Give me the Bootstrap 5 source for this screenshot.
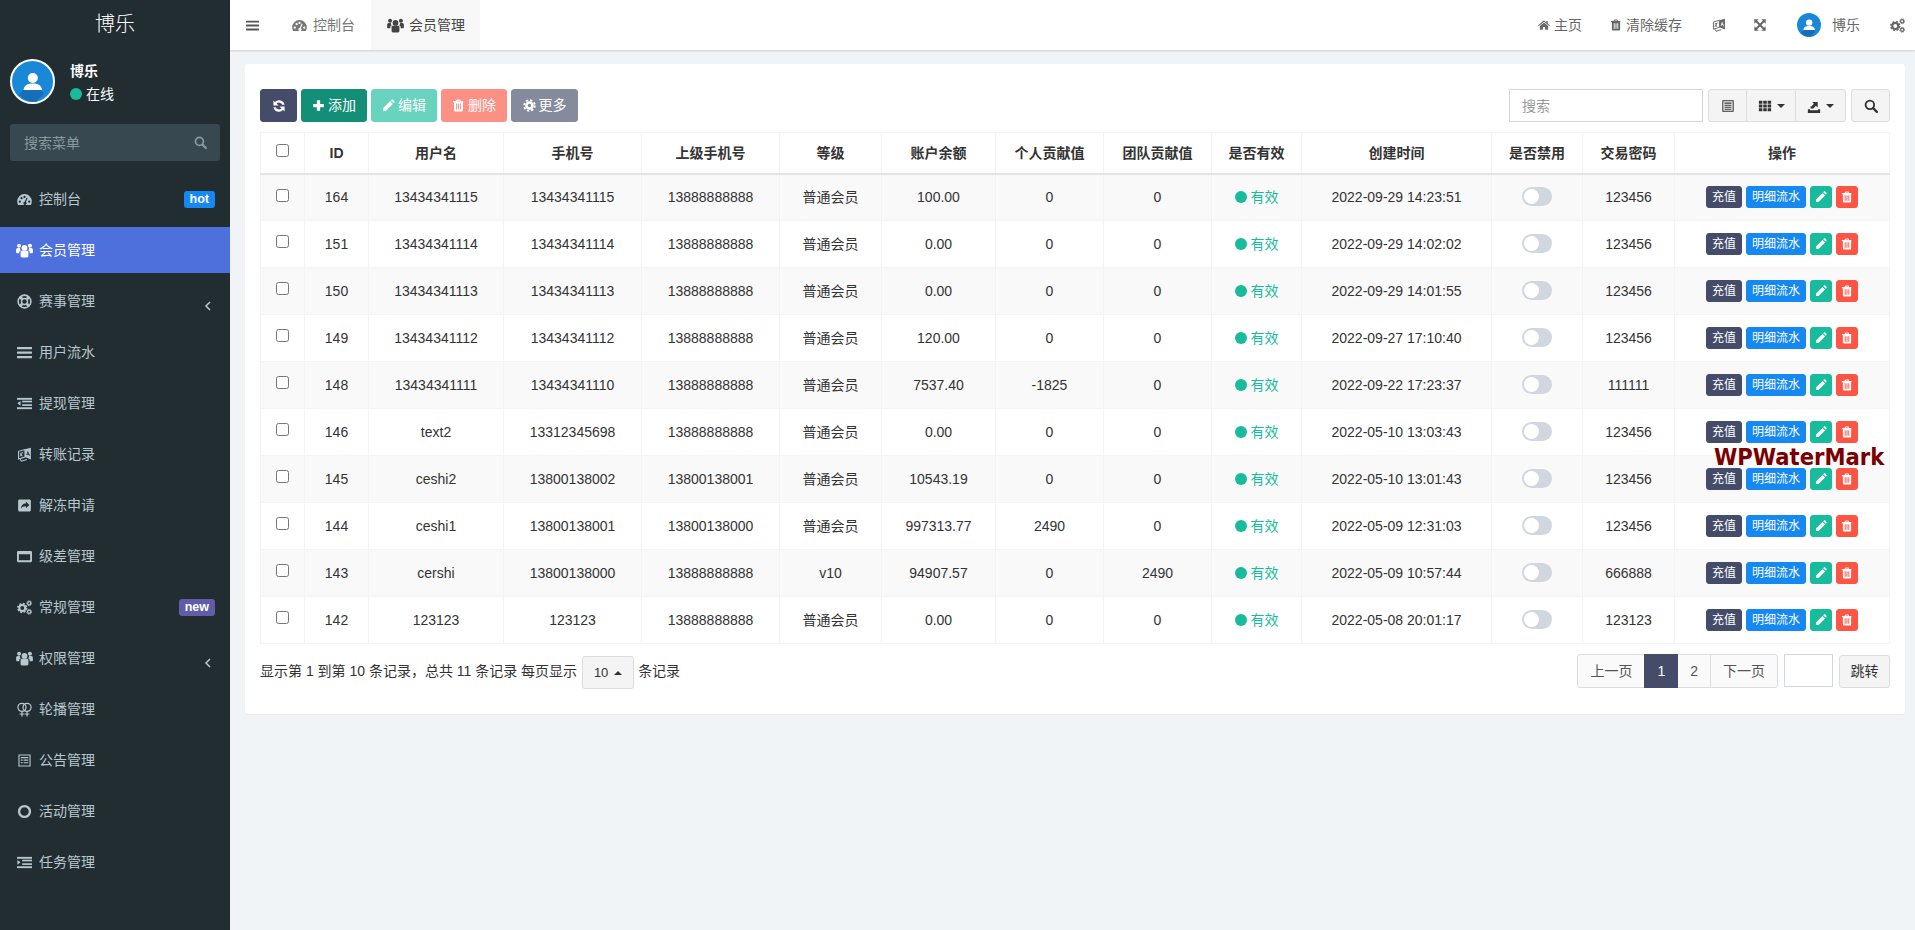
<!DOCTYPE html>
<html lang="zh-CN">
<head>
    <meta charset="UTF-8">
    <title>会员管理</title>
    <meta name="viewport" content="width=device-width, initial-scale=1">
    <link href="https://cdn.jsdelivr.net/npm/bootstrap@5.3.2/dist/css/bootstrap.min.css" rel="stylesheet">
    <script src="https://cdn.jsdelivr.net/npm/bootstrap@5.3.2/dist/js/bootstrap.bundle.min.js"></script>
    <style>
        body {
            font-family: "Liberation Sans", "Noto Sans CJK SC", sans-serif;
            font-size: 14px;
            line-height: 20px;
            color: #333;
            background-color: #f1f4f6;
            min-height: 930px;
        }
        .ico { width: 1em; height: 1em; fill: currentColor; flex: none; }
        .caret-down, .caret-up { display: inline-block; width: 0; height: 0; border-left: 4px solid transparent; border-right: 4px solid transparent; }
        .caret-down { border-top: 4px solid currentColor; }
        .caret-up { border-bottom: 4px solid currentColor; }

        /* sidebar */
        .side-bar { width: 230px; background-color: #222d32; flex: none; min-height: 930px; }
        .side-logo { height: 50px; font-size: 20px; color: #fff; line-height: 48px; text-align: center; font-weight: 300; }
        .side-user { margin: 9px 0 0 10px; height: 45px; gap: 15px; color: #fff; }
        .side-avatar { width: 45px; height: 45px; }
        .side-name { font-weight: 700; margin-top: 2px; }
        .side-status { margin-top: 3px; font-size: 14px; gap: 4px; }
        .dot-on { width: 12px; height: 12px; border-radius: 50%; background-color: #18bc9c; flex: none; }
        .side-search { margin: 20px 10px 15px; height: 37px; background-color: #374850; border-radius: 3px; padding: 0 13px 0 14px; color: #8a989f; }
        .side-search .ico { font-size: 13px; }
        .side-menu .nav-link { height: 46px; margin-bottom: 5px; padding: 0 15px 0 17px; color: #b8c7ce; gap: 7px; }
        .side-menu .nav-link .ico { font-size: 15px; width: 15px; }
        .side-menu .nav-link .ico-u { font-size: 17px; width: 17px; margin: 0 -1px; }
        .side-menu .nav-link.active { background-color: #4e70dc; color: #fff; }
        .side-tag { font-size: 12.5px; font-weight: 700; line-height: 17px; height: 17px; padding: 0 6px; border-radius: 3px; color: #fff; }
        .tag-hot { background-color: #1688f1; }
        .tag-new { background-color: #605ca8; }
        .side-menu .nav-link .side-chevron { font-size: 10px; width: 10px; margin: 9px 2px 0 0; }

        /* top bar */
        .top-bar { height: 50px; background-color: #fff; box-shadow: 0 1px 2px rgba(0, 0, 0, .15); color: #666; }
        .top-toggle { width: 46px; padding-left: 16px; color: #555; }
        .top-toggle .ico { font-size: 13px; }
        .top-tab { height: 50px; padding: 0 16px; gap: 6px; color: #777; }
        .top-tab.on { background-color: #f8f8f8; color: #444; padding: 0 15px 0 16px; }
        .top-tab .ico { font-size: 15px; }
        .top-tab.on .ico { font-size: 17px; margin-right: -1px; }
        .top-right { gap: 30px; padding-right: 10px; }
        .top-right .d-flex { gap: 4px; }
        .top-right .ico-sm { font-size: 12px; }
        .top-right .ico-md { font-size: 15px; }
        .top-right .ico-lang { margin-right: -3px; }
        .top-right .shift-left { margin-left: -2px; }
        .top-avatar { width: 24px; height: 24px; margin-right: 7px; }

        /* panel */
        .page-body { padding: 14px 10px 0 15px; }
        .panel-box { background-color: #fff; border-radius: 3px; padding: 25px 15px 26px; box-shadow: 0 1px 1px rgba(0, 0, 0, .04); height: 650px; position: relative; }
        .tool-row { margin-bottom: 10px; }
        .btn-tool { --bs-btn-padding-x: 0; --bs-btn-padding-y: 0; --bs-btn-font-size: 14px; --bs-btn-line-height: 31px; --bs-btn-border-radius: 3px; --bs-btn-color: #fff; --bs-btn-disabled-color: #fff; --bs-btn-disabled-opacity: .65; height: 33px; gap: 3px; }
        .btn-tool .ico { font-size: 13px; }
        .tool-navy { --bs-btn-bg: #444c69; --bs-btn-border-color: #444c69; --bs-btn-disabled-bg: #444c69; --bs-btn-disabled-border-color: #444c69; width: 37px; }
        .tool-navy .ico { font-size: 12px; }
        .tool-add { --bs-btn-bg: #128f76; --bs-btn-border-color: #128f76; width: 66px; }
        .tool-edit { --bs-btn-disabled-bg: #18bc9c; --bs-btn-disabled-border-color: #18bc9c; width: 66px; }
        .tool-del { --bs-btn-disabled-bg: #fc5545; --bs-btn-disabled-border-color: #fc5545; width: 66px; }
        .tool-more { --bs-btn-disabled-bg: #444c69; --bs-btn-disabled-border-color: #444c69; width: 67px; }
        .tool-search { width: 194px; height: 33px; margin-right: 5px; border-radius: 0; border: 1px solid #d2d6de; font-size: 14px; padding: 0 12px; }
        .tool-search::placeholder, .jump-input::placeholder { color: #999; }
        .btn-soft { --bs-btn-bg: #f4f4f4; --bs-btn-border-color: #ddd; --bs-btn-color: #333; --bs-btn-padding-x: 0; --bs-btn-padding-y: 0; --bs-btn-font-size: 14px; --bs-btn-line-height: 31px; --bs-btn-border-radius: 3px; height: 33px; gap: 5px; }
        .soft-a { width: 39px; }
        .soft-b { width: 50px; }
        .soft-c { width: 51px; }
        .soft-d { width: 39px; margin-left: 5px; }

        .data-table { --bs-table-border-color: #f4f4f4; --bs-table-striped-bg: #f9f9f9; --bs-table-color: #333; --bs-table-striped-color: #333; table-layout: fixed; width: 1629px; margin: 0; font-size: 14px; }
        .data-table th, .data-table td { padding: 0 4px; text-align: center; vertical-align: middle; height: 47px; white-space: nowrap; }
        .data-table thead th { height: 41px; font-weight: 700; border-bottom: 2px solid #e4e4e4; }
        .data-table > :not(caption) > * > * { border-color: #f4f4f4; }
        .data-table > thead > tr > th { border-bottom-color: #e4e4e4; }
        .data-table .form-check-input { width: 13px; height: 13px; margin: 0 0 6px; border: 1px solid #767676; border-radius: 2.5px; display: inline-block; vertical-align: middle; }
        .st-ok { color: #18bc9c; gap: 4px; }
        .switch-off { display: block; width: 30px; height: 19px; margin: 0 auto 2px; border-radius: 10px; background-color: #d2d6de; padding: 2px; }
        .switch-off i { display: block; width: 15px; height: 15px; border-radius: 50%; background-color: #fff; }
        .act-row { gap: 4px; }
        .btn-act { --bs-btn-padding-x: 0; --bs-btn-padding-y: 0; --bs-btn-font-size: 12px; --bs-btn-line-height: 20px; --bs-btn-border-radius: 3px; --bs-btn-color: #fff; height: 22px; }
        .act-navy { --bs-btn-bg: #444c69; --bs-btn-border-color: #444c69; width: 36px; }
        .act-blue { --bs-btn-bg: #1688f1; --bs-btn-border-color: #1688f1; width: 60px; }
        .act-green { --bs-btn-bg: #18bc9c; --bs-btn-border-color: #18bc9c; width: 22px; }
        .act-red { --bs-btn-bg: #fc5545; --bs-btn-border-color: #fc5545; width: 22px; }

        .foot-row { padding-top: 10px; }
        .btn-size { width: 52px; margin: 2px 4px 0 5px; gap: 6px; --bs-btn-font-size: 13px; }
        .foot-text { margin-top: 7px; }
        .foot-row .pagination { --bs-pagination-padding-x: 12px; --bs-pagination-padding-y: 6px; --bs-pagination-font-size: 14px; --bs-pagination-color: #555; --bs-pagination-bg: #fafafa; --bs-pagination-border-color: #ddd; --bs-pagination-border-radius: 3px; --bs-pagination-active-bg: #444c69; --bs-pagination-active-border-color: #444c69; margin: 0; }
        .jump-input { width: 49px; height: 33px; margin-left: 6px; border-radius: 0; border: 1px solid #d2d6de; }
        .btn-jump { width: 51px; margin: 1px 0 0 6px; }
        .mark-text { position: absolute; left: 1469px; top: 381px; font-family: "DejaVu Sans", sans-serif; font-stretch: condensed; font-weight: 700; font-size: 23.5px; line-height: 24px; color: #7a0000; white-space: nowrap; }
    </style>
</head>
<body>
    <svg width="0" height="0" class="position-absolute">
        <symbol id="i-dash" viewBox="0 0 16 16"><path fill-rule="evenodd" d="M8 2.2A7.8 7.8 0 0 0 .2 10c0 1.5.4 2.8 1.1 3.8h13.4c.7-1 1.100-2.300 1.100-3.800A7.800 7.800 0 0 0 8 2.200zM3 9.100a1.200 1.200 0 1 1 0 2.400 1.200 1.200 0 0 1 0-2.400zm1.900-3.700a1.200 1.200 0 1 1 0 2.400 1.200 1.200 0 0 1 0-2.400zM8 4a1.200 1.200 0 1 1 0 2.400A1.200 1.200 0 0 1 8 4zm3.400 2.300-1.900 4.400a1.700 1.700 0 1 1-1.300-.3L10.200 6zM13 9.100a1.200 1.200 0 1 1 0 2.400 1.200 1.200 0 0 1 0-2.400z"/></symbol>
        <symbol id="i-users" viewBox="0 0 16 16"><circle cx="8" cy="5.600" r="2.700"/><circle cx="2.900" cy="3.600" r="1.900"/><circle cx="13.100" cy="3.600" r="1.900"/><path d="M4.300 9.500c0-.8.600-1.300 1.300-1.300h4.800c.7 0 1.300.5 1.300 1.300v3.600c0 .8-.6 1.400-1.400 1.400H5.700c-.8 0-1.400-.6-1.400-1.400z"/><path d="M.1 7.500c0-1 .6-1.800 1.500-1.800h2.100c-.1 1.100.5 1.800 1 2.100-1 .3-1.600 1-1.600 1.800v1H1c-.5 0-.9-.4-.9-.9zM15.900 7.500c0-1-.6-1.800-1.500-1.800h-2.100c.1 1.100-.5 1.800-1 2.100 1 .3 1.600 1 1.600 1.800v1H15c.5 0 .9-.4.9-.9z"/></symbol>
        <symbol id="i-ring" viewBox="0 0 16 16"><circle cx="8" cy="8" r="6.800" fill="none" stroke="currentColor" stroke-width="1.700"/><circle cx="8" cy="8" r="3.200" fill="none" stroke="currentColor" stroke-width="1.500"/><path d="M3 3 5.600 5.600M13 3l-2.600 2.600M3 13l2.600-2.600M13 13l-2.600-2.600" stroke="currentColor" stroke-width="3"/></symbol>
        <symbol id="i-bars" viewBox="0 0 16 16"><rect y="2" width="16" height="2.400" rx=".5"/><rect y="6.800" width="16" height="2.400" rx=".5"/><rect y="11.600" width="16" height="2.400" rx=".5"/></symbol>
        <symbol id="i-outdent" viewBox="0 0 16 16"><rect y="2" width="16" height="2"/><rect x="5.500" y="5" width="10.500" height="1.800"/><rect x="5.500" y="8.800" width="10.500" height="1.800"/><rect y="12" width="16" height="2"/><path d="M3.800 5.300v5L.4 7.800z"/></symbol>
        <symbol id="i-indent" viewBox="0 0 16 16"><rect y="2" width="16" height="2"/><rect x="5.500" y="5" width="10.500" height="1.800"/><rect x="5.500" y="8.800" width="10.500" height="1.800"/><rect y="12" width="16" height="2"/><path d="M.4 5.300v5l3.400-2.500z"/></symbol>
        <symbol id="i-lang" viewBox="0 0 16 16"><path fill="none" stroke="currentColor" stroke-width="1.100" d="M8.500 2.600 1.600 4.600v8.200l6.900-2.100zM3.500 13l1.200 2.200 5.800-1.900"/><path fill-rule="evenodd" d="M8.500 2.500 14.800.8v12.400L8.500 10.700zM11.500 3.900l-1.600 4.700 1.100.3.300-.9 1.500.4.300 1 1 .3zm.1 2.100.5 1.500-.9-.2z"/><path d="M3 6.300l3.800-1.100v.9l-1 .3c-.1 1-.4 1.700-.9 2.300l1.300.7-.4.800-1.600-.9-1.300 1-.4-.7 1.200-.9c-.3-.4-.5-.8-.6-1.300l.8-.2c.1.300.2.600.4.800.3-.4.500-.9.600-1.400L3 7.100z"/></symbol>
        <symbol id="i-share" viewBox="0 0 16 16"><path fill-rule="evenodd" d="M2.800 1.500h10.400c.9 0 1.600.7 1.600 1.600v9.800c0 .9-.7 1.600-1.600 1.600H2.800c-.9 0-1.600-.7-1.600-1.600V3.100c0-.9.700-1.600 1.600-1.600zm6.700 2.300v2.100c-3.100 0-5 1.600-5.200 5.500 1-1.900 2.800-2.700 5.200-2.600v2.200l3.700-3.600z"/></symbol>
        <symbol id="i-window" viewBox="0 0 16 16"><path fill-rule="evenodd" d="M1.300 2h13.400c.7 0 1.300.6 1.300 1.300v9.400c0 .7-.6 1.300-1.300 1.300H1.300C.6 14 0 13.400 0 12.700V3.300C0 2.600.6 2 1.300 2zm.7 3.500V12h12V5.500z"/></symbol>
        <symbol id="i-cogs" viewBox="0 0 16 16"><circle cx="5.600" cy="8.500" r="3.200" fill="none" stroke="currentColor" stroke-width="2.200"/><circle cx="5.600" cy="8.500" r="4.700" fill="none" stroke="currentColor" stroke-width="1.700" stroke-dasharray="2 1.700"/><circle cx="13" cy="3.400" r="1.700" fill="none" stroke="currentColor" stroke-width="1.300"/><circle cx="13" cy="3.400" r="2.600" fill="none" stroke="currentColor" stroke-width="1" stroke-dasharray="1.200 1"/><circle cx="13" cy="12.600" r="1.700" fill="none" stroke="currentColor" stroke-width="1.300"/><circle cx="13" cy="12.600" r="2.600" fill="none" stroke="currentColor" stroke-width="1" stroke-dasharray="1.200 1"/></symbol>
        <symbol id="i-venus" viewBox="0 0 16 16"><g fill="none" stroke="currentColor" stroke-width="1.300"><circle cx="5.300" cy="5.700" r="4.300"/><circle cx="10.700" cy="5.700" r="4.300"/><path d="M5.300 10v5.500M10.700 10v5.500M2.800 12.800h5M8.200 12.800h5"/></g></symbol>
        <symbol id="i-list" viewBox="0 0 16 16"><path fill-rule="evenodd" d="M1.500 1.500h13v13h-13zM2.700 2.700v10.600h10.600V2.700z"/><path d="M4 4.300h8v1.200H4zM4 7h2v1.200H4zM7 7h5v1.200H7zM4 9.800h2V11H4zM7 9.800h5V11H7z"/></symbol>
        <symbol id="i-circle" viewBox="0 0 16 16"><circle cx="8" cy="8" r="5.800" fill="none" stroke="currentColor" stroke-width="2.500"/></symbol>
        <symbol id="i-chev" viewBox="0 0 10 10"><path fill="none" stroke="currentColor" stroke-width="1.500" d="M7 1 3 5l4 4"/></symbol>
        <symbol id="i-search" viewBox="0 0 16 16"><circle cx="6.700" cy="6.700" r="4.900" fill="none" stroke="currentColor" stroke-width="2.100"/><path d="m10.400 10.400 4.300 4.300" stroke="currentColor" stroke-width="2.600" stroke-linecap="round"/></symbol>
        <symbol id="i-refresh" viewBox="1.800 1.800 12.400 12.400"><path d="M13.800 6.800A5.900 5.900 0 0 0 3.800 3.800L2.200 2.200v5.300h5.300L5.500 5.500a3.600 3.600 0 0 1 5.900 1.300zM2.200 9.200a5.900 5.900 0 0 0 10 3l1.600 1.600V8.500H8.500l2 2a3.600 3.600 0 0 1-5.900-1.300z"/></symbol>
        <symbol id="i-plus" viewBox="0 0 16 16"><path d="M6 1.500h4v4.500h4.500v4H10v4.500H6V10H1.500V6H6z"/></symbol>
        <symbol id="i-pencil" viewBox="0 0 16 16"><path d="M1.300 11.300 10 2.600l3.400 3.400-8.700 8.700H1.300zM11 1.700l.9-.9c.5-.5 1.200-.5 1.700 0l1.600 1.600c.5.5.5 1.200 0 1.700l-.9.900z"/></symbol>
        <symbol id="i-trash" viewBox="0 0 16 16"><path fill-rule="evenodd" d="M5.500 1.500c.1-.5.500-.8 1-.8h3c.5 0 .9.300 1 .8l.3 1.200h3v1.500H13.500V13.500c0 1-.7 1.800-1.500 1.800H4c-.8 0-1.500-.8-1.500-1.800V4.200H1.200V2.700h3zM6.300 2.700h3.400L9.500 2h-3zM5 5.500v7.500h1.200V5.500zm2.400 0v7.500h1.200V5.500zm2.400 0v7.500H11V5.500z"/></symbol>
        <symbol id="i-cog" viewBox="0 0 16 16"><circle cx="8" cy="8" r="3.700" fill="none" stroke="currentColor" stroke-width="3.200"/><circle cx="8" cy="8" r="6.500" fill="none" stroke="currentColor" stroke-width="2.400" stroke-dasharray="2.800 2.300"/></symbol>
        <symbol id="i-home" viewBox="0 0 16 16"><path d="M8 1.800 .3 8.300l.8 1L8 3.600l6.900 5.700.8-1-2.700-2.300V2.500h-2v2z"/><path d="M8 4.800 2.500 9.300v5h4v-3.700h3v3.700h4v-5z"/></symbol>
        <symbol id="i-expand" viewBox="0 0 16 16"><path d="M1.500 1.500h5L4.800 3.200 8 6.400l3.200-3.200L9.500 1.500h5v5l-1.700-1.700L9.600 8l3.200 3.200 1.700-1.700v5h-5l1.700-1.700L8 9.600l-3.200 3.200 1.700 1.700h-5v-5l1.700 1.700L6.400 8 3.200 4.800 1.500 6.500z"/></symbol>
        <symbol id="i-th" viewBox="0 0 16 16"><path d="M1 2h4v3.300H1zM6 2h4v3.300H6zM11 2h4v3.300h-4zM1 6.300h4v3.300H1zM6 6.300h4v3.300H6zM11 6.300h4v3.300h-4zM1 10.700h4V14H1zM6 10.700h4V14H6zM11 10.700h4V14h-4z"/></symbol>
        <symbol id="i-export" viewBox="0 0 16 16"><path d="M1 11.800h2.400v1H12.600v-1H15V16H1z"/><path d="M4 10.800h3.200l3-3 2 2V3.500H5.900l2 2-3 3H4z"/></symbol>
        <symbol id="i-columns" viewBox="0 0 16 16"><path fill-rule="evenodd" d="M1.500 1.500h13v13h-13zM2.700 2.700v10.600h10.600V2.700z"/><path d="M4 4h8v1.300H4zM4 6.500h8v1.200H4zM4 8.900h8v1.200H4zM4 11.200h8v1H4z"/></symbol>
    </svg>

    <div class="d-flex">
        <aside class="side-bar">
            <div class="side-logo">博乐</div>
            <div class="side-user d-flex">
                <svg class="side-avatar" viewBox="0 0 45 45"><circle cx="22.500" cy="22.500" r="21.500" fill="#1a88d8" stroke="#fff" stroke-width="2"/><path fill="#166fb6" d="M13 31 22 25l12 9-7.500 8.600A21 21 0 0 1 9 36z"/><circle cx="22.800" cy="19" r="5" fill="#fff"/><path fill="#fff" d="M13.500 31c.5-4 3-6.500 9.300-6.500s8.800 2.500 9.200 6.500z"/></svg>
                <div>
                    <div class="side-name">博乐</div>
                    <div class="side-status d-flex align-items-center"><span class="dot-on"></span>在线</div>
                </div>
            </div>
            <div class="side-search d-flex align-items-center justify-content-between"><span>搜索菜单</span><svg class="ico"><use href="#i-search"/></svg></div>
            <nav class="side-menu nav flex-column">
                <a class="nav-link d-flex align-items-center" href="#"><svg class="ico"><use href="#i-dash"/></svg>控制台<span class="side-tag tag-hot ms-auto">hot</span></a>
                <a class="nav-link active d-flex align-items-center" href="#"><svg class="ico ico-u"><use href="#i-users"/></svg>会员管理</a>
                <a class="nav-link d-flex align-items-center" href="#"><svg class="ico"><use href="#i-ring"/></svg>赛事管理<svg class="ico side-chevron ms-auto"><use href="#i-chev"/></svg></a>
                <a class="nav-link d-flex align-items-center" href="#"><svg class="ico"><use href="#i-bars"/></svg>用户流水</a>
                <a class="nav-link d-flex align-items-center" href="#"><svg class="ico"><use href="#i-outdent"/></svg>提现管理</a>
                <a class="nav-link d-flex align-items-center" href="#"><svg class="ico"><use href="#i-lang"/></svg>转账记录</a>
                <a class="nav-link d-flex align-items-center" href="#"><svg class="ico"><use href="#i-share"/></svg>解冻申请</a>
                <a class="nav-link d-flex align-items-center" href="#"><svg class="ico"><use href="#i-window"/></svg>级差管理</a>
                <a class="nav-link d-flex align-items-center" href="#"><svg class="ico"><use href="#i-cogs"/></svg>常规管理<span class="side-tag tag-new ms-auto">new</span></a>
                <a class="nav-link d-flex align-items-center" href="#"><svg class="ico ico-u"><use href="#i-users"/></svg>权限管理<svg class="ico side-chevron ms-auto"><use href="#i-chev"/></svg></a>
                <a class="nav-link d-flex align-items-center" href="#"><svg class="ico"><use href="#i-venus"/></svg>轮播管理</a>
                <a class="nav-link d-flex align-items-center" href="#"><svg class="ico"><use href="#i-list"/></svg>公告管理</a>
                <a class="nav-link d-flex align-items-center" href="#"><svg class="ico"><use href="#i-circle"/></svg>活动管理</a>
                <a class="nav-link d-flex align-items-center" href="#"><svg class="ico"><use href="#i-indent"/></svg>任务管理</a>
            </nav>
        </aside>

        <div class="flex-grow-1">
            <header class="top-bar d-flex align-items-center">
                <div class="top-toggle d-flex align-items-center"><svg class="ico"><use href="#i-bars"/></svg></div>
                <div class="top-tab d-flex align-items-center"><svg class="ico"><use href="#i-dash"/></svg>控制台</div>
                <div class="top-tab on d-flex align-items-center"><svg class="ico"><use href="#i-users"/></svg>会员管理</div>
                <div class="top-right d-flex align-items-center ms-auto">
                    <div class="d-flex align-items-center"><svg class="ico ico-sm"><use href="#i-home"/></svg>主页</div>
                    <div class="d-flex align-items-center shift-left"><svg class="ico ico-sm"><use href="#i-trash"/></svg>清除缓存</div>
                    <svg class="ico ico-lang"><use href="#i-lang"/></svg>
                    <svg class="ico"><use href="#i-expand"/></svg>
                    <div class="d-flex align-items-center"><svg class="top-avatar" viewBox="0 0 45 45"><circle cx="22.500" cy="22.500" r="22.500" fill="#1a88d8"/><path fill="#166fb6" d="M13 31 22 25l12 9-7.500 10A22 22 0 0 1 7 37z"/><circle cx="22.800" cy="18" r="6" fill="#fff"/><path fill="#fff" d="M12 32c.5-5 3.500-7.500 10.800-7.500S33 27 33.500 32z"/></svg>博乐</div>
                    <svg class="ico ico-md"><use href="#i-cogs"/></svg>
                </div>
            </header>

            <main class="page-body">
                <div class="panel-box">
                    <div class="tool-row d-flex align-items-center">
                        <div class="d-flex gap-1">
                            <button class="btn btn-tool tool-navy d-flex align-items-center justify-content-center"><svg class="ico"><use href="#i-refresh"/></svg></button>
                            <button class="btn btn-tool tool-add d-flex align-items-center justify-content-center"><svg class="ico"><use href="#i-plus"/></svg>添加</button>
                            <button class="btn btn-tool tool-edit d-flex align-items-center justify-content-center" disabled><svg class="ico"><use href="#i-pencil"/></svg>编辑</button>
                            <button class="btn btn-tool tool-del d-flex align-items-center justify-content-center" disabled><svg class="ico"><use href="#i-trash"/></svg>删除</button>
                            <button class="btn btn-tool tool-more d-flex align-items-center justify-content-center" disabled><svg class="ico"><use href="#i-cog"/></svg>更多</button>
                        </div>
                        <input class="form-control tool-search ms-auto" type="text" placeholder="搜索">
                        <div class="btn-group">
                            <button class="btn btn-soft soft-a d-flex align-items-center justify-content-center"><svg class="ico"><use href="#i-columns"/></svg></button>
                            <button class="btn btn-soft soft-b d-flex align-items-center justify-content-center"><svg class="ico"><use href="#i-th"/></svg><span class="caret-down"></span></button>
                            <button class="btn btn-soft soft-c d-flex align-items-center justify-content-center"><svg class="ico"><use href="#i-export"/></svg><span class="caret-down"></span></button>
                        </div>
                        <button class="btn btn-soft soft-d d-flex align-items-center justify-content-center"><svg class="ico"><use href="#i-search"/></svg></button>
                    </div>

                    <table class="table table-bordered table-striped data-table">
                        <colgroup>
                            <col width="44"><col width="64"><col width="135"><col width="138"><col width="138"><col width="102"><col width="114"><col width="108"><col width="108"><col width="90"><col width="190"><col width="91"><col width="92"><col width="215">
                        </colgroup>
                        <thead>
                            <tr>
                                <th><input class="form-check-input" type="checkbox"></th>
                                <th>ID</th><th>用户名</th><th>手机号</th><th>上级手机号</th><th>等级</th><th>账户余额</th><th>个人贡献值</th><th>团队贡献值</th><th>是否有效</th><th>创建时间</th><th>是否禁用</th><th>交易密码</th><th>操作</th>
                            </tr>
                        </thead>
                        <tbody id="rows"></tbody>
                    </table>

                    <div class="foot-row d-flex align-items-start">
                        <span class="foot-text">显示第 1 到第 10 条记录，总共 11 条记录 每页显示</span>
                        <button class="btn btn-soft btn-size d-flex align-items-center justify-content-center">10<span class="caret-up"></span></button>
                        <span class="foot-text">条记录</span>
                        <ul class="pagination ms-auto">
                            <li class="page-item"><a class="page-link" href="#">上一页</a></li>
                            <li class="page-item active"><a class="page-link" href="#">1</a></li>
                            <li class="page-item"><a class="page-link" href="#">2</a></li>
                            <li class="page-item"><a class="page-link" href="#">下一页</a></li>
                        </ul>
                        <input class="form-control jump-input" type="text">
                        <button class="btn btn-soft btn-jump">跳转</button>
                    </div>
                    <div class="mark-text">WPWaterMark</div>
                </div>
            </main>
        </div>
    </div>

    <script>
        const data = [
            [164, '13434341115', '13434341115', '13888888888', '普通会员', '100.00', 0, 0, '2022-09-29 14:23:51', '123456'],
            [151, '13434341114', '13434341114', '13888888888', '普通会员', '0.00', 0, 0, '2022-09-29 14:02:02', '123456'],
            [150, '13434341113', '13434341113', '13888888888', '普通会员', '0.00', 0, 0, '2022-09-29 14:01:55', '123456'],
            [149, '13434341112', '13434341112', '13888888888', '普通会员', '120.00', 0, 0, '2022-09-27 17:10:40', '123456'],
            [148, '13434341111', '13434341110', '13888888888', '普通会员', '7537.40', -1825, 0, '2022-09-22 17:23:37', '111111'],
            [146, 'text2', '13312345698', '13888888888', '普通会员', '0.00', 0, 0, '2022-05-10 13:03:43', '123456'],
            [145, 'ceshi2', '13800138002', '13800138001', '普通会员', '10543.19', 0, 0, '2022-05-10 13:01:43', '123456'],
            [144, 'ceshi1', '13800138001', '13800138000', '普通会员', '997313.77', 2490, 0, '2022-05-09 12:31:03', '123456'],
            [143, 'cershi', '13800138000', '13888888888', 'v10', '94907.57', 0, 2490, '2022-05-09 10:57:44', '666888'],
            [142, '123123', '123123', '13888888888', '普通会员', '0.00', 0, 0, '2022-05-08 20:01:17', '123123']
        ];
        document.getElementById('rows').innerHTML = data.map(r => `
            <tr>
                <td><input class="form-check-input" type="checkbox"></td>
                <td>${r[0]}</td><td>${r[1]}</td><td>${r[2]}</td><td>${r[3]}</td><td>${r[4]}</td><td>${r[5]}</td><td>${r[6]}</td><td>${r[7]}</td>
                <td><div class="st-ok d-flex align-items-center justify-content-center"><span class="dot-on"></span>有效</div></td>
                <td>${r[8]}</td>
                <td><span class="switch-off"><i></i></span></td>
                <td>${r[9]}</td>
                <td><div class="act-row d-flex justify-content-center">
                    <button class="btn btn-act act-navy">充值</button>
                    <button class="btn btn-act act-blue">明细流水</button>
                    <button class="btn btn-act act-green d-flex align-items-center justify-content-center"><svg class="ico"><use href="#i-pencil"/></svg></button>
                    <button class="btn btn-act act-red d-flex align-items-center justify-content-center"><svg class="ico"><use href="#i-trash"/></svg></button>
                </div></td>
            </tr>`).join('');
    </script>
</body>
</html>
